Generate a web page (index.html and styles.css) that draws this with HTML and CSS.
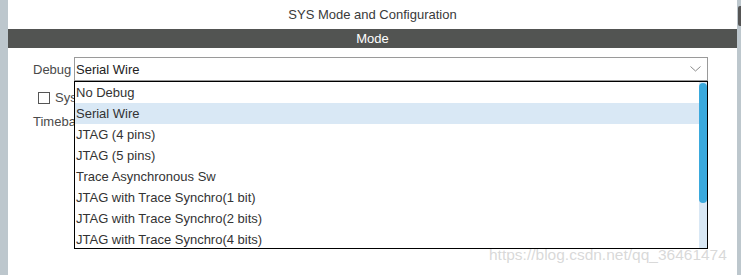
FILE: index.html
```html
<!DOCTYPE html>
<html>
<head>
<meta charset="utf-8">
<link rel="stylesheet" href="styles.css">
</head>
<body>
<div class="frame">
  <div class="side-left"></div>
  <div class="main">
    <div class="title">SYS Mode and Configuration</div>
    <div class="bar">Mode</div>
    <div class="content">
      <div class="row">
        <span class="label">Debug</span>
        <div class="select">
          <span class="value">Serial Wire</span>
          <svg class="chev" width="11" height="6" viewBox="0 0 11 6"><path d="M0.5 0.5 L5.5 5 L10.5 0.5" fill="none" stroke="#8a8a8a" stroke-width="1"/></svg>
        </div>
      </div>
      <div class="row2">
        <span class="check"></span><span class="label">Sys</span>
      </div>
      <div class="row3"><span class="label">Timebase</span></div>
      <div class="list">
        <div class="items">
          <div class="item">No Debug</div>
          <div class="item sel">Serial Wire</div>
          <div class="item">JTAG (4 pins)</div>
          <div class="item">JTAG (5 pins)</div>
          <div class="item">Trace Asynchronous Sw</div>
          <div class="item">JTAG with Trace Synchro(1 bit)</div>
          <div class="item">JTAG with Trace Synchro(2 bits)</div>
          <div class="item">JTAG with Trace Synchro(4 bits)</div>
        </div>
        <div class="scroll"><div class="thumb"></div></div>
      </div>
      <div class="mark">https://blog.csdn.net/qq_36461474</div>
    </div>
  </div>
  <div class="side-right"><div class="knob"></div></div>
</div>
</body>
</html>
```
FILE: styles.css
```css
html, body {
  margin: 0;
  padding: 0;
  background: #ffffff;
}
body {
  font-family: "Liberation Sans", Arial, sans-serif;
  font-size: 13px;
  color: #333;
}
.frame {
  display: flex;
  width: 741px;
  height: 275px;
  overflow: hidden;
}
.side-left {
  width: 8px;
  background: #bdc7cd;
  flex: none;
}
.side-right {
  width: 4px;
  background: #bdc7cd;
  flex: none;
  padding-top: 6px;
}
.knob {
  width: 3px;
  height: 20px;
  background: #555;
  border-radius: 2px 0 0 2px;
  margin-left: 1px;
}
.main {
  flex: 1;
  display: flex;
  flex-direction: column;
  position: relative;
}
.title {
  height: 29px;
  line-height: 29px;
  text-align: center;
  color: #3a3a3a;
  font-size: 13px;
}
.bar {
  height: 19px;
  line-height: 19px;
  background: #525452;
  color: #fff;
  text-align: center;
  font-size: 13px;
}
.content {
  position: relative;
  flex: 1;
  padding-left: 25px;
}
.row {
  display: flex;
  align-items: center;
  margin-top: 9px;
  height: 24px;
}
.label {
  color: #4a4a4a;
}
.row .label {
  width: 41px;
}
.select {
  box-sizing: border-box;
  width: 634px;
  height: 24px;
  border: 1px solid #9a9a9a;
  display: flex;
  align-items: center;
  justify-content: space-between;
  padding: 0 6px 0 1px;
  color: #222;
}
.chev { display: block; }
.row2 {
  display: flex;
  align-items: center;
  margin-top: 9px;
  margin-left: 5px;
  height: 15px;
}
.check {
  box-sizing: border-box;
  width: 12px;
  height: 12px;
  border: 1px solid #555;
  margin-right: 5px;
}
.row3 {
  margin-top: 9px;
}
.list {
  position: absolute;
  left: 66px;
  top: 33px;
  box-sizing: border-box;
  width: 634px;
  height: 168px;
  border: 1px solid #000;
  background: #fff;
  display: flex;
  overflow: hidden;
}
.items {
  flex: 1;
}
.item {
  height: 21px;
  line-height: 21px;
  padding-left: 1px;
  color: #333;
  white-space: nowrap;
}
.item.sel {
  background: #d9e8f5;
}
.scroll {
  width: 8px;
  background: #d9e8f5;
  padding-top: 1px;
}
.thumb {
  height: 120px;
  background: #3aa9dd;
  border-radius: 4px;
}
.mark {
  position: absolute;
  left: 481px;
  top: 198px;
  font-size: 15.5px;
  color: rgba(200, 200, 200, 0.7);
  white-space: nowrap;
}
```
